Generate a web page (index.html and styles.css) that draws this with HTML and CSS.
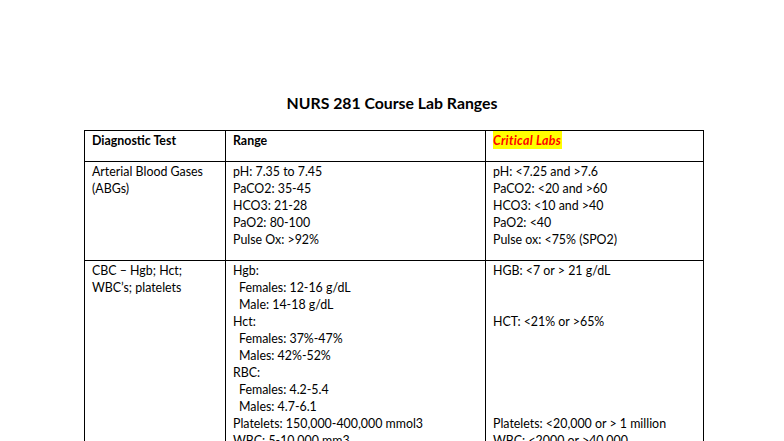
FILE: index.html
```html
<!DOCTYPE html>
<html>
<head>
<meta charset="utf-8">
<link rel="stylesheet" href="styles.css">
</head>
<body>
<div class="page">
  <h1 class="title">NURS 281 Course Lab Ranges</h1>
  <table class="labs">
    <colgroup>
      <col class="c1"><col class="c2"><col class="c3">
    </colgroup>
    <thead>
      <tr class="head">
        <th>Diagnostic Test</th>
        <th>Range</th>
        <th><span class="critical">Critical Labs</span></th>
      </tr>
    </thead>
    <tbody>
      <tr>
        <td>Arterial Blood Gases<br>(ABGs)</td>
        <td>pH: 7.35 to 7.45<br>PaCO2: 35-45<br>HCO3: 21-28<br>PaO2: 80-100<br>Pulse Ox: &gt;92%</td>
        <td>pH: &lt;7.25 and &gt;7.6<br>PaCO2: &lt;20 and &gt;60<br>HCO3: &lt;10 and &gt;40<br>PaO2: &lt;40<br>Pulse ox: &lt;75% (SPO2)</td>
      </tr>
      <tr>
        <td>CBC – Hgb; Hct;<br>WBC’s; platelets</td>
        <td>Hgb:<br><span class="ind">Females: 12-16 g/dL</span><br><span class="ind">Male: 14-18 g/dL</span><br>Hct:<br><span class="ind">Females: 37%-47%</span><br><span class="ind">Males: 42%-52%</span><br>RBC:<br><span class="ind">Females: 4.2-5.4</span><br><span class="ind">Males: 4.7-6.1</span><br>Platelets: 150,000-400,000 mmol3<br>WBC: 5-10,000 mm3</td>
        <td>HGB: &lt;7 or &gt; 21 g/dL<br><br><br>HCT: &lt;21% or &gt;65%<br><br><br><br><br><br>Platelets: &lt;20,000 or &gt; 1 million<br>WBC: &lt;2000 or &gt;40,000</td>
      </tr>
    </tbody>
  </table>
</div>
</body>
</html>
```
FILE: styles.css
```css
html, body {
  margin: 0;
  padding: 0;
  background: #ffffff;
}
.page {
  padding-top: 93px;
  font-family: Lato, "Open Sans", sans-serif;
  color: #000;
}
.title {
  margin: 0 0 17px 0;
  text-align: center;
  font-size: 15.8px;
  line-height: 20px;
  font-weight: bold;
}
.labs {
  margin-left: 84px;
  width: 619px;
  border-collapse: collapse;
  table-layout: fixed;
  font-size: 12.4px;
  line-height: 17px;
}
.c1 { width: 141px; }
.c2 { width: 260px; }
.c3 { width: 218px; }
.labs th, .labs td {
  border: 1px solid #000;
  text-align: left;
  vertical-align: top;
  padding: 1px 6px 12px 7px;
}
.labs th {
  font-weight: bold;
}
.critical {
  background: #ffff00;
  color: #ff0000;
  font-style: italic;
  letter-spacing: 0.3px;
  padding: 2px 1px 1px 0;
}
.ind {
  padding-left: 6px;
}
```
